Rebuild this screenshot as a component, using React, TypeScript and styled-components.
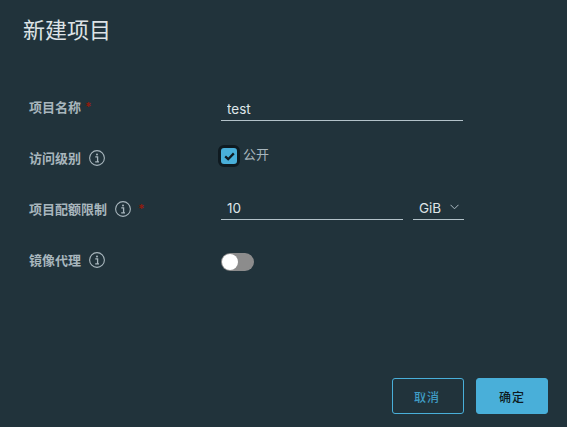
import React from "react";
import styled, { createGlobalStyle } from "styled-components";

const Global = createGlobalStyle`
  html, body {
    margin: 0;
    padding: 0;
    background: #21333b;
  }
  * {
    box-sizing: border-box;
  }
`;

const Modal = styled.div`
  width: 567px;
  height: 427px;
  background: #21333b;
  display: flex;
  flex-direction: column;
  font-family: Inter, "Noto Sans CJK SC", sans-serif;
  overflow: hidden;
`;

const Title = styled.h3`
  margin: 0;
  padding: 14px 0 0 23px;
  height: 92px;
  font-size: 22px;
  line-height: 32px;
  font-weight: 400;
  color: #dde3e6;
`;

const Form = styled.form`
  flex: 1;
  display: flex;
  flex-direction: column;
  padding-left: 29px;
`;

const Row = styled.div`
  height: 51px;
  display: grid;
  grid-template-columns: 192px 1fr;
  align-items: start;
`;

const Label = styled.label`
  display: flex;
  align-items: center;
  height: 30px;
  font-size: 13px;
  font-weight: 700;
  color: #a8b6bd;
  margin-top: -1px;
`;

const Required = styled.span<{ $gap: number }>`
  margin-left: ${(p) => p.$gap}px;
  font-size: 12px;
  color: #8f1b0e;
`;

const InfoIcon = styled.svg`
  width: 18px;
  height: 18px;
  margin-left: 7px;
  margin-top: 2px;
  color: #a8b6bd;
  flex: none;
`;

const Controls = styled.div<{ $shift: number }>`
  display: flex;
  gap: 10px;
  height: 30px;
  margin-top: ${(p) => p.$shift}px;
`;

const TextInput = styled.input<{ $width: number }>`
  width: ${(p) => p.$width}px;
  height: 30px;
  padding: 6px 0 0 6px;
  border: 0;
  border-bottom: 1px solid #b3c2c9;
  background: transparent;
  outline: none;
  font-family: inherit;
  font-size: 13.5px;
  font-weight: 400;
  color: #dfe5e8;
`;

const Select = styled.div`
  width: 51px;
  height: 30px;
  padding: 6px 0 0 6px;
  display: flex;
  align-items: center;
  gap: 9px;
  border-bottom: 1px solid #b3c2c9;
  font-size: 13.5px;
  font-weight: 400;
  color: #dfe5e8;
`;

const Chevron = styled.svg`
  width: 9px;
  height: 6px;
  margin-bottom: 1px;
  color: #adbbc4;
`;

const CheckLine = styled.div`
  display: flex;
  align-items: flex-start;
  gap: 3px;
  margin-left: -3px;
  font-size: 13px;
  line-height: 20px;
  color: #a8b6bd;
`;

const CheckBox = styled.span`
  width: 22px;
  height: 22px;
  margin-top: 2px;
  display: flex;
  align-items: center;
  justify-content: center;
  background: #49afd9;
  border: 3px solid #0f1a20;
  border-radius: 6px;
`;

const CheckText = styled.span`
  margin-top: 1px;
`;

const Toggle = styled.span`
  display: block;
  width: 33px;
  height: 18px;
  margin-top: 8px;
  padding: 1px;
  background: #8c8c8c;
  border-radius: 9px;
`;

const Knob = styled.span`
  display: block;
  width: 16px;
  height: 16px;
  background: #fff;
  border-radius: 50%;
`;

const Footer = styled.footer`
  display: flex;
  justify-content: flex-end;
  gap: 12px;
  padding: 0 19px 13px 0;
`;

const Button = styled.button<{ $primary?: boolean }>`
  width: 72px;
  height: 36px;
  padding: ${(p) => (p.$primary ? "0" : "0 2px 0 0")};
  border: 1px solid #49afd9;
  border-radius: 3px;
  background: ${(p) => (p.$primary ? "#49afd9" : "transparent")};
  color: ${(p) => (p.$primary ? "#0f1a20" : "#3f9cc4")};
  font-family: inherit;
  font-size: 12px;
  font-weight: 500;
  letter-spacing: 1px;
`;

const Info = () => (
  <InfoIcon viewBox="0 0 18 18" fill="none">
    <circle cx="9" cy="9" r="7.4" stroke="currentColor" strokeWidth="1.1" />
    <circle cx="9" cy="5.4" r="1" fill="currentColor" />
    <path d="M7.3 7.8H9.6V12.6M7.2 12.9H11" stroke="currentColor" strokeWidth="1.3" />
  </InfoIcon>
);

const App = () => {
  return (
    <Modal>
      <Global />
      <Title>新建项目</Title>
      <Form>
        <Row>
          <Label>
            项目名称<Required $gap={4}>*</Required>
          </Label>
          <Controls $shift={-1}>
            <TextInput $width={242} defaultValue="test" />
          </Controls>
        </Row>
        <Row>
          <Label>
            访问级别
            <Info />
          </Label>
          <CheckLine>
            <CheckBox>
              <svg width="11" height="9" viewBox="0 0 11 9" fill="none">
                <path d="M1.2 4.4L4.2 7.2L9.8 1.4" stroke="#0f1a20" strokeWidth="2.3" />
              </svg>
            </CheckBox>
            <CheckText>公开</CheckText>
          </CheckLine>
        </Row>
        <Row>
          <Label>
            项目配额限制
            <Info />
            <Required $gap={6}>*</Required>
          </Label>
          <Controls $shift={-4}>
            <TextInput $width={182} defaultValue="10" />
            <Select>
              GiB
              <Chevron viewBox="0 0 9 6" fill="none">
                <path d="M0.5 0.8L4.5 4.8L8.5 0.8" stroke="currentColor" strokeWidth="1" />
              </Chevron>
            </Select>
          </Controls>
        </Row>
        <Row>
          <Label>
            镜像代理
            <Info />
          </Label>
          <div>
            <Toggle>
              <Knob />
            </Toggle>
          </div>
        </Row>
      </Form>
      <Footer>
        <Button type="button">取消</Button>
        <Button type="button" $primary>
          确定
        </Button>
      </Footer>
    </Modal>
  );
};

export default App;
